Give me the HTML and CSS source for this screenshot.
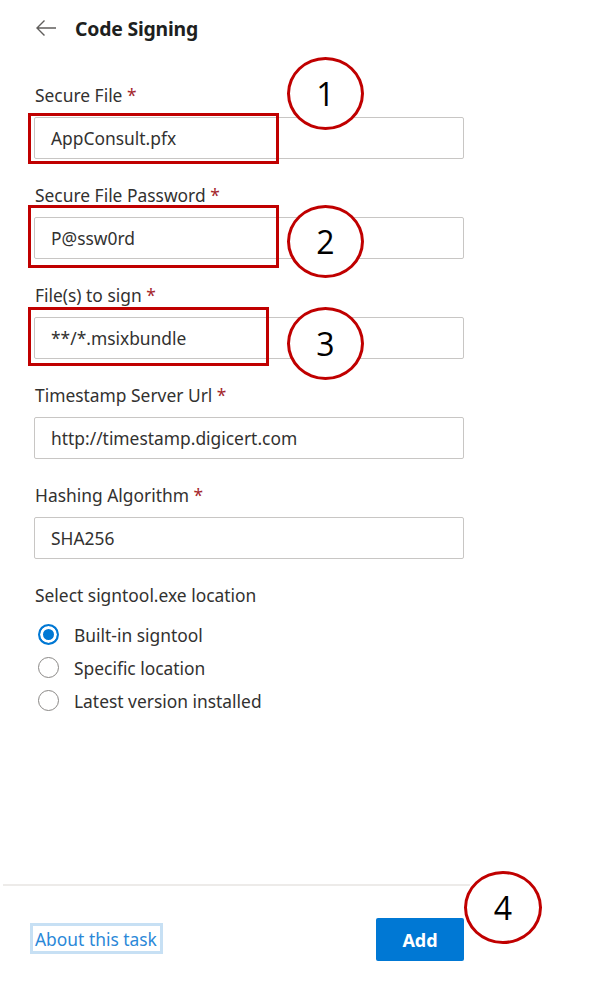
FILE: index.html
```html
<!DOCTYPE html>
<html lang="en">
<head>
<meta charset="utf-8">
<title>Code Signing</title>
<link rel="stylesheet" href="styles.css">
</head>
<body>
<div class="page">
  <div class="panel">
    <div class="header">
      <svg class="back" width="22" height="18" viewBox="0 0 22 18"><path d="M21 9H2M9.5 1.5L2 9l7.5 7.5" fill="none" stroke="#605e5c" stroke-width="1.4"/></svg>
      <h1 class="title">Code Signing</h1>
    </div>
    <div class="form">
      <div class="field">
        <div class="label">Secure File <span class="req">*</span></div>
        <div class="input">AppConsult.pfx</div>
      </div>
      <div class="field">
        <div class="label">Secure File Password <span class="req">*</span></div>
        <div class="input">P@ssw0rd</div>
      </div>
      <div class="field">
        <div class="label">File(s) to sign <span class="req">*</span></div>
        <div class="input">**/*.msixbundle</div>
      </div>
      <div class="field">
        <div class="label">Timestamp Server Url <span class="req">*</span></div>
        <div class="input">http://timestamp.digicert.com</div>
      </div>
      <div class="field">
        <div class="label">Hashing Algorithm <span class="req">*</span></div>
        <div class="input">SHA256</div>
      </div>
      <div class="group">
        <div class="label">Select signtool.exe location</div>
        <div class="radios">
          <div class="radio"><span class="dot checked"></span><span>Built-in signtool</span></div>
          <div class="radio"><span class="dot"></span><span>Specific location</span></div>
          <div class="radio"><span class="dot"></span><span>Latest version installed</span></div>
        </div>
      </div>
    </div>
    <div class="footer">
      <a class="link" href="#">About this task</a>
      <button class="add">Add</button>
    </div>
  </div>

  <div class="mark box1"></div>
  <div class="mark box2"></div>
  <div class="mark box3"></div>
  <div class="num n1">1</div>
  <div class="num n2">2</div>
  <div class="num n3">3</div>
  <div class="num n4">4</div>
</div>
</body>
</html>
```

FILE: styles.css
```css
* { box-sizing: border-box; }
html, body { margin: 0; padding: 0; background: #fff; }
body {
  font-family: "Noto Sans", "Open Sans", sans-serif;
  color: #323130;
}
.page {
  position: relative;
  width: 594px;
  height: 1001px;
  overflow: hidden;
}
.panel {
  width: 470px;
  height: 1001px;
  display: flex;
  flex-direction: column;
}
.header {
  height: 56px;
  display: flex;
  align-items: center;
  padding-left: 35px;
  gap: 18px;
}
.back { display: block; }
.title {
  margin: 0;
  font-size: 19.4px;
  font-weight: 700;
  color: #201f1e;
  letter-spacing: -0.2px;
}
.form {
  flex: 1;
  padding: 28px 6px 0 34px;
}
.field {
  margin-bottom: 25px;
}
.label {
  height: 22px;
  line-height: 22px;
  font-size: 17.4px;
  color: #323130;
  padding-left: 1px;
  margin-bottom: 11px;
  white-space: nowrap;
}
.req { color: #a4262c; }
.input {
  height: 42px;
  border: 1px solid #c8c6c4;
  border-radius: 2px;
  padding: 0 16px;
  display: flex;
  align-items: center;
  font-size: 17.4px;
  color: #323130;
}
.group .label { margin-bottom: 12px; }
.radios {
  display: flex;
  flex-direction: column;
}
.radio {
  height: 33px;
  display: flex;
  align-items: center;
  gap: 15px;
  padding-left: 4px;
  font-size: 17.4px;
}
.dot {
  width: 21px;
  height: 21px;
  border-radius: 50%;
  border: 1px solid #8a8886;
  background: #fff;
  flex: none;
}
.dot.checked {
  border: 2px solid #0078d4;
  background: #0078d4;
  box-shadow: inset 0 0 0 3px #fff;
}
.footer {
  height: 117px;
  border-top: 2px solid #edebe9;
  margin-left: 3px;
  display: flex;
  justify-content: space-between;
  align-items: flex-start;
  padding: 32px 6px 0 27px;
}
.link {
  margin-top: 5px;
  height: 31px;
  display: flex;
  align-items: center;
  padding: 0 3px 0 2px;
  border: 3px solid #c7e0f4;
  font-size: 17.4px;
  color: #2b88d8;
  text-decoration: none;
  white-space: nowrap;
}
.add {
  width: 88px;
  height: 43px;
  border: none;
  border-radius: 2px;
  background: #0078d4;
  color: #fff;
  font-family: "Noto Sans", "Open Sans", sans-serif;
  font-size: 18px;
  font-weight: 700;
}
.mark {
  position: absolute;
  border: 3px solid #c00000;
}
.box1 { left: 28px; top: 113px; width: 251px; height: 51px; }
.box2 { left: 28px; top: 205px; width: 251px; height: 63px; }
.box3 { left: 28px; top: 307px; width: 241px; height: 59px; }
.num {
  position: absolute;
  width: 77px;
  height: 73px;
  border: 3px solid #c00000;
  border-radius: 50%;
  background: #fff;
  display: flex;
  align-items: center;
  justify-content: center;
  font-family: "Open Sans", "Noto Sans", sans-serif;
  font-size: 32px;
  color: #000;
  line-height: 1;
}
.n1 { left: 287px; top: 57px; }
.n2 { left: 287px; top: 205px; }
.n3 { left: 287px; top: 307px; }
.n4 { left: 464px; top: 871px; width: 78px; height: 73px; }
```
